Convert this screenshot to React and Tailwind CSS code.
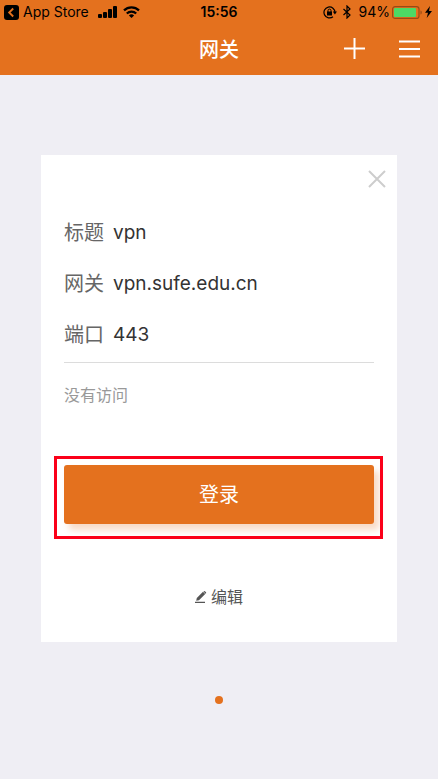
import React from "react";

const fields = [
  { label: "标题", value: "vpn" },
  { label: "网关", value: "vpn.sufe.edu.cn" },
  { label: "端口", value: "443" },
];

function StatusBar() {
  return (
    <div className="relative flex h-6 items-center justify-between pl-1 pr-[6px] text-[14px] leading-6 text-black">
      <div className="flex items-center">
        <svg className="h-[15px] w-[15px]" viewBox="0 0 15 15" aria-hidden="true">
          <rect width="15" height="15" rx="3" fill="currentColor" />
          <path d="M9.200 3.500 5.200 7.500l4 4" fill="none" stroke="#e4711e" strokeWidth="1.900" />
        </svg>
        <span className="ml-1">App Store</span>
        <svg className="ml-[9px] h-3 w-5" viewBox="0 0 20 12" fill="currentColor" aria-hidden="true">
          <rect x="0" y="8" width="4" height="4" rx="1" />
          <rect x="5" y="6" width="4" height="6" rx="1" />
          <rect x="10" y="3" width="4" height="9" rx="1" />
          <rect x="15" y="0" width="4" height="12" rx="1" />
        </svg>
        <svg className="ml-[5px] h-3 w-[17px]" viewBox="0 0 17 12" aria-hidden="true">
          <g fill="none" stroke="currentColor" strokeWidth="2.200">
            <path d="M1 4.400a10.600 10.600 0 0 1 15 0" />
            <path d="M3.800 7.500a6.700 6.700 0 0 1 9.400 0" />
          </g>
          <path d="M5.900 9.500a3.900 3.900 0 0 1 5.200 0L8.500 12z" fill="currentColor" />
        </svg>
      </div>
      <time className="absolute left-1/2 -translate-x-1/2 font-semibold">15:56</time>
      <div className="flex items-center">
        <svg className="h-[13px] w-[14px]" viewBox="0 0 14 13" fill="none" stroke="currentColor" aria-hidden="true">
          <path d="M10 10.700A5.500 5.500 0 1 1 12 6.500" strokeWidth="1.200" />
          <path d="M9.800 5.600h4.200l-2.100 2.800z" fill="currentColor" stroke="none" />
          <rect x="4" y="5.500" width="5" height="4" fill="currentColor" stroke="none" />
          <path d="M5 6V4.600a1.500 1.500 0 0 1 3 0V6" />
        </svg>
        <svg className="ml-[6px] h-[14px] w-2" viewBox="0 0 8 14" fill="none" stroke="currentColor" strokeWidth="1.200" aria-hidden="true">
          <path d="M.5 4 7 10 4 13V1l3 3-6.500 6" />
        </svg>
        <span className="ml-2">94%</span>
        <svg className="ml-[2px] h-[13px] w-[30px]" viewBox="0 0 30 13" aria-hidden="true">
          <rect x=".6" y=".6" width="26.400" height="11.800" rx="2.500" fill="none" stroke="#984a15" strokeWidth="1.200" />
          <rect x="2" y="2" width="22" height="9" rx="1" fill="#4cd964" />
          <path d="M28.500 4.500c1.700.6 1.700 3.400 0 4z" fill="#984a15" />
        </svg>
        <svg className="ml-[3px] h-3 w-[7px]" viewBox="0 0 7 12" fill="currentColor" aria-hidden="true">
          <path d="M5 0 0 6.800h3L1.700 12 7 4.900H4z" />
        </svg>
      </div>
    </div>
  );
}

function Header() {
  return (
    <header className="bg-[#e4711e]">
      <StatusBar />
      <div className="relative flex h-[51px] items-center justify-end gap-[34px] pb-[2px] pr-[18px] text-white">
        <h1 className="absolute left-1/2 top-0 -translate-x-1/2 text-[20px] font-medium leading-[52px]">网关</h1>
        <button type="button" aria-label="添加">
          <svg className="h-[21px] w-[21px]" viewBox="0 0 21 21" stroke="currentColor" strokeWidth="2" aria-hidden="true">
            <path d="M10.500 0v21M0 10.500h21" />
          </svg>
        </button>
        <button type="button" aria-label="菜单">
          <svg className="h-[18px] w-[21px]" viewBox="0 0 21 18" stroke="currentColor" strokeWidth="2" aria-hidden="true">
            <path d="M0 1.500h21M0 9h21M0 16.500h21" />
          </svg>
        </button>
      </div>
    </header>
  );
}

export default function App() {
  return (
    <div className="min-h-screen bg-[#efeef4] font-['Inter','Noto_Sans_CJK_SC',sans-serif]">
      <Header />
      <main className="px-[41px] pt-20">
        <section className="bg-white px-[23px] pb-[29px]">
          <div className="-mr-3 flex h-[52px] items-start justify-end pt-[15px]">
            <button type="button" aria-label="关闭">
              <svg className="h-[18px] w-[18px]" viewBox="0 0 18 18" stroke="#cdcdcd" strokeWidth="2" aria-hidden="true">
                <path d="m1 1 16 16M17 1 1 17" />
              </svg>
            </button>
          </div>
          <dl className="border-b border-[#dcdcdc] pb-[2px]">
            {fields.map((field) => (
              <div key={field.label} className="flex h-[51px] items-center gap-[9px] leading-7">
                <dt className="text-[20px] text-[#666666]">{field.label}</dt>
                <dd className="text-[19px] text-[#333333]">{field.value}</dd>
              </div>
            ))}
          </dl>
          <p className="mt-[18px] text-[16px] leading-7 text-[#999999]">没有访问</p>
          <div className="relative mt-14">
            <button
              type="button"
              className="h-[59px] w-full rounded-[3px] bg-[#e4711e] text-[20px] text-white shadow-[5px_6px_6px_rgba(228,113,30,0.25)]"
            >
              登录
            </button>
            <div className="pointer-events-none absolute -bottom-[15px] -left-[10px] -right-[9px] -top-[9px] border-3 border-[#fb0019]" />
          </div>
          <div className="mt-[57px] flex justify-center">
            <button type="button" className="flex h-8 items-center gap-1 text-[16px] text-[#555555]">
              <svg className="h-3 w-3" viewBox="0 0 12 12" fill="currentColor" aria-hidden="true">
                <path d="M1.200 9.800 1.800 7 8 .8l2.200 2.200L4 9.200zM8.500.4q.9-.8 1.700 0l.6.6q.8.800 0 1.600l-.3.200zM0 10.700h10V12H0z" />
              </svg>
              编辑
            </button>
          </div>
        </section>
        <div className="mt-[54px] flex justify-center pb-8">
          <span className="h-2 w-2 rounded-full bg-[#e4711e]" />
        </div>
      </main>
    </div>
  );
}
